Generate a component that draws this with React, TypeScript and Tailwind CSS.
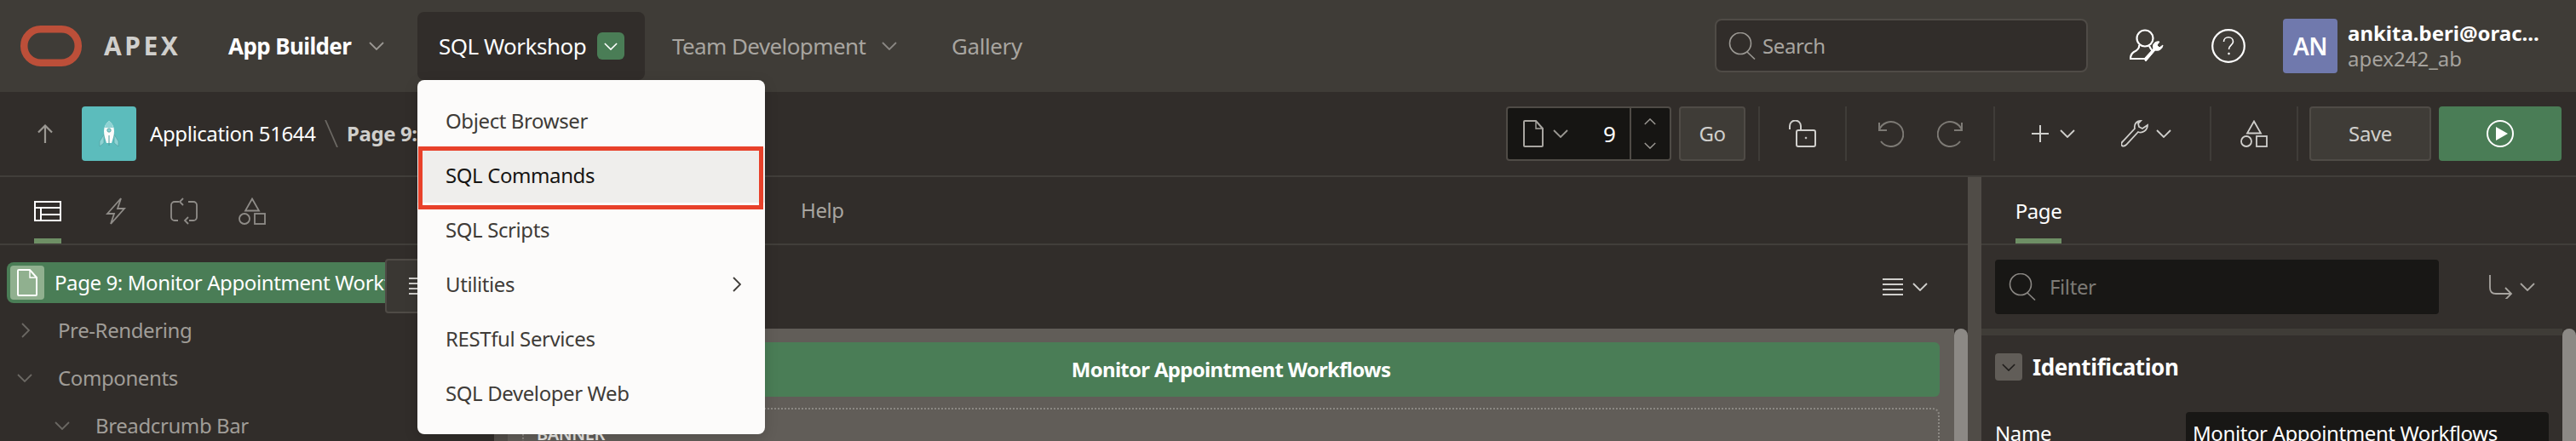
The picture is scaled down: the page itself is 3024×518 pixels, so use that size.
import type { ReactNode } from 'react';

const G = '#9b9893';

function Chevron({ dir = 'down', color = G, className = 'w-[18px] h-[10px]' }: { dir?: 'down' | 'up'; color?: string; className?: string }) {
  return (
    <svg viewBox="0 0 18 10" className={className} fill="none" stroke={color} strokeWidth="1.8">
      <path d={dir === 'down' ? 'M1 1l8 8 8-8' : 'M1 9l8-8 8 8'} />
    </svg>
  );
}

function ChevronRight({ color = G }: { color?: string }) {
  return (
    <svg viewBox="0 0 10 18" className="w-[10px] h-[18px]" fill="none" stroke={color} strokeWidth="1.8">
      <path d="M1 1l8 8-8 8" />
    </svg>
  );
}

function DocIcon({ color = '#a8a5a0', className = 'w-[24px] h-[32px]' }: { color?: string; className?: string }) {
  return (
    <svg viewBox="0 0 24 32" className={className} fill="none" stroke={color} strokeWidth="2">
      <path d="M1 2a1 1 0 0 1 1-1h13l8 9v20a1 1 0 0 1-1 1H2a1 1 0 0 1-1-1z" />
      <path d="M15 1v9h8" strokeWidth="1.4" />
    </svg>
  );
}

function SearchIcon({ color = G }: { color?: string }) {
  return (
    <svg viewBox="0 0 32 32" className="w-[32px] h-[32px]" fill="none" stroke={color} strokeWidth="1.6">
      <circle cx="14" cy="13" r="12.5" />
      <path d="M22 23l9 8.5" />
    </svg>
  );
}

function Shapes({ color }: { color: string }) {
  return (
    <svg viewBox="0 0 32 32" className="w-[32px] h-[32px]" fill="none" stroke={color} strokeWidth="1.8">
      <path d="M16 1.5l8 14H8z" />
      <circle cx="7" cy="25" r="6" />
      <rect x="19" y="19" width="12" height="12" />
    </svg>
  );
}

function Hamburger({ color = '#d0cfcc' }: { color?: string }) {
  return (
    <svg viewBox="0 0 24 20" className="w-[24px] h-[20px]" fill={color}>
      <rect x="0" y="0" width="24" height="2" />
      <rect x="0" y="6" width="24" height="2" />
      <rect x="0" y="12" width="24" height="2" />
      <rect x="0" y="18" width="24" height="2" />
    </svg>
  );
}

function Sep() {
  return <div className="w-[2px] h-[64px] bg-[#3f3c38] shrink-0" />;
}

function TreeRow({ label, open, indent }: { label: string; open?: boolean; indent: string }) {
  return (
    <div className={`flex items-center h-[56px] ${indent}`}>
      <div className="w-[48px] flex justify-start items-center">
        {open ? <Chevron color="#6b6863" /> : <div className="ml-[5px] flex"><ChevronRight color="#6b6863" /></div>}
      </div>
      <span className="text-[24px] text-[#a09d98] leading-none">{label}</span>
    </div>
  );
}

function MenuItem({ label, active, children }: { label: string; active?: boolean; children?: ReactNode }) {
  return (
    <div className={`h-[64px] flex items-center justify-between pl-[33px] pr-[28px] text-[24px] ${active ? 'bg-[#efeeec] text-[#161513]' : 'text-[#3f3c38]'}`}>
      <span>{label}</span>
      {children}
    </div>
  );
}

export default function App() {
  return (
    <div className="relative w-[3024px] h-[518px] overflow-hidden bg-[#312d2a] font-['Noto_Sans',sans-serif] tracking-[-0.4px] flex flex-col">
      {/* Top nav */}
      <header className="h-[108px] shrink-0 bg-[#3f3c37] flex items-center pl-[24px]">
        <svg viewBox="0 0 72 48" className="w-[72px] h-[48px] shrink-0" fill="none" stroke="#bc4f39" strokeWidth="8.5">
          <rect x="4.25" y="4.25" width="63.5" height="39.5" rx="19.5" />
        </svg>
        <span className="ml-[26px] w-[146px] text-[30px] font-bold tracking-[3.5px] text-[#d0cfcc] leading-none">APEX</span>
        <div className="w-[222px] flex items-center">
          <span className="w-[165px] text-[26px] font-bold tracking-[-0.6px] text-white whitespace-nowrap">App Builder</span>
          <Chevron />
        </div>
        <div className="w-[267px] h-[80px] self-start mt-[14px] bg-[#312d2a] rounded-[8px] flex items-center pl-[25px]">
          <span className="w-[186px] text-[26px] tracking-[-0.5px] text-white whitespace-nowrap">SQL Workshop</span>
          <span className="w-[32px] h-[32px] rounded-[6px] bg-[#4a7d56] flex items-center justify-center">
            <Chevron color="#ffffff" className="w-[16px] h-[9px]" />
          </span>
        </div>
        <div className="ml-[32px] w-[328px] flex items-center">
          <span className="w-[246px] text-[26px] tracking-[-0.6px] text-[#a8a5a0] whitespace-nowrap">Team Development</span>
          <Chevron color="#8a8783" />
        </div>
        <span className="w-[896px] text-[26px] text-[#a8a5a0]">Gallery</span>
        <div className="w-[438px] h-[63px] self-start mt-[22px] bg-[#312d2a] border-2 border-[#4f4b46] rounded-[8px] flex items-center pl-[14px] gap-[8px]">
          <SearchIcon />
          <span className="text-[24px] text-[#a8a5a0]">Search</span>
        </div>
        <div className="ml-[49px] w-[96px] shrink-0">
          <svg viewBox="0 0 40 40" className="w-[40px] h-[40px]" fill="none" stroke="#ffffff" strokeWidth="2.2">
            <circle cx="18" cy="11" r="9.5" />
            <path d="M11 19c1 4-2 6-6 8-3 2-4 5-4 8h16" />
            <path d="M23 20c2 4 2 4 4 6" />
            <path d="M19 38l11-13c3 1 8 0 9-6l-4 3-3-3 3-4c-5-1-9 3-7 8L17 35z" fill="#ffffff" strokeWidth="1" />
          </svg>
        </div>
        <div className="w-[84px] shrink-0">
          <svg viewBox="0 0 40 40" className="w-[40px] h-[40px]" fill="none" stroke="#ffffff" strokeWidth="2.2">
            <circle cx="20" cy="20" r="18.8" />
            <path d="M14.5 15c0-7 11-7 11 0 0 4-5 4-5 9" strokeWidth="1.6" />
            <circle cx="20.5" cy="29" r="1" fill="#ffffff" strokeWidth="0.6" />
          </svg>
        </div>
        <div className="w-[64px] h-[64px] shrink-0 rounded-[4px] bg-[#7079ad] flex items-center justify-center text-[28px] font-semibold text-white">AN</div>
        <div className="ml-[12px] flex flex-col tracking-normal">
          <span className="text-[24px] font-bold text-white leading-[30px] whitespace-nowrap">ankita.beri@orac...</span>
          <span className="text-[24px] text-[#a6a39e] leading-[30px]">apex242_ab</span>
        </div>
      </header>

      {/* Page designer toolbar */}
      <div className="h-[100px] shrink-0 border-b-2 border-[#413e3a] flex items-center pl-[44px] pr-[16px]">
        <svg viewBox="0 0 18 22" className="w-[18px] h-[22px] shrink-0" fill="none" stroke="#9b9893" strokeWidth="2.2">
          <path d="M9 22V2M1 9.5L9 1.5l8 8" />
        </svg>
        <div className="ml-[34px] w-[64px] h-[64px] rounded-[4px] bg-[#5cbcbc] flex items-center justify-center shrink-0">
          <svg viewBox="0 0 24 32" className="w-[24px] h-[32px]">
            <path d="M6 17L1 25v6l5-4zM18 17l5 8v6l-5-4z" fill="#8fd3d3" stroke="#4a9c9c" strokeWidth="0.6" />
            <path d="M12 1c4 3 6 7 6 12 0 6-2 10-3 14H9C8 23 6 19 6 13 6 8 8 4 12 1z" fill="#fcfbfa" />
            <path d="M12 1c3 2 5 5 5 8H7c0-3 2-6 5-8z" fill="#8fd3d3" />
            <circle cx="12" cy="12" r="2.2" fill="#8fd3d3" stroke="#4a9c9c" strokeWidth="0.8" />
            <path d="M12 18v12" stroke="#4a9c9c" strokeWidth="1" />
          </svg>
        </div>
        <span className="ml-[16px] w-[205px] text-[24px] text-white whitespace-nowrap">Application 51644</span>
        <svg viewBox="0 0 16 32" className="w-[16px] h-[32px] shrink-0" fill="none" stroke="#6b6863" strokeWidth="1.8">
          <path d="M1 0l14 32" />
        </svg>
        <span className="ml-[10px] w-[1361px] text-[24px] font-bold text-[#d0cfcc] whitespace-nowrap">Page 9:</span>

        <div className="w-[194px] h-[64px] shrink-0 bg-[#161513] border-2 border-[#4f4b46] rounded-[4px] flex items-center">
          <div className="ml-[18px] flex items-center">
            <DocIcon />
            <div className="ml-[11px] flex"><Chevron /></div>
          </div>
          <span className="ml-[41px] w-[16px] text-[26px] text-white">9</span>
          <div className="ml-[15px] w-[46px] h-full border-l-2 border-[#4f4b46] flex flex-col items-center justify-center gap-[20px]">
            <Chevron dir="up" className="w-[14px] h-[8px]" />
            <Chevron className="w-[14px] h-[8px]" />
          </div>
        </div>
        <button className="ml-[9px] w-[78px] h-[64px] shrink-0 bg-[#3f3c37] border-2 border-[#4f4b46] rounded-[4px] text-[24px] text-[#d0cfcc]">Go</button>
        <div className="ml-[15px] flex"><Sep /></div>
        <div className="w-[100px] shrink-0 flex justify-center">
          <svg viewBox="0 0 32 32" className="w-[32px] h-[32px]" fill="none" stroke="#d0cfcc" strokeWidth="2">
            <rect x="9" y="12" width="22" height="19" rx="2" />
            <path d="M1 11V7a6 6 0 0 1 13 0v5" />
            <circle cx="20" cy="21" r="1" fill="#d0cfcc" strokeWidth="0.6" />
          </svg>
        </div>
        <Sep />
        <div className="w-[172px] shrink-0 flex justify-center gap-[39px]">
          <svg viewBox="0 0 32 32" className="w-[32px] h-[32px]" fill="none" stroke="#7d7a75" strokeWidth="2">
            <path d="M3 3v9h9" />
            <path d="M3 12A14.5 14.5 0 1 1 5 25" />
          </svg>
          <svg viewBox="0 0 32 32" className="w-[32px] h-[32px]" fill="none" stroke="#7d7a75" strokeWidth="2">
            <path d="M29 3v9h-9" />
            <path d="M29 12A14.5 14.5 0 1 0 27 25" />
          </svg>
        </div>
        <Sep />
        <div className="w-[252px] shrink-0 flex items-center pl-[43px]">
          <svg viewBox="0 0 20 20" className="w-[20px] h-[20px]" fill="none" stroke="#d0cfcc" strokeWidth="2">
            <path d="M10 0v20M0 10h20" />
          </svg>
          <div className="ml-[13px] flex"><Chevron color="#d0cfcc" /></div>
          <svg viewBox="0 0 32 32" className="ml-[54px] w-[32px] h-[32px]" fill="none" stroke="#d0cfcc" strokeWidth="1.8">
            <path d="M23 1c-5 0-8 4-7 9L2 25c-2 2-2 4-1 5s3 1 5-1l14-15c5 2 11-2 11-8l-6 4-4-2-1-4z" />
          </svg>
          <div className="ml-[9px] flex"><Chevron color="#d0cfcc" /></div>
        </div>
        <Sep />
        <div className="w-[100px] shrink-0 flex justify-center"><Shapes color="#d0cfcc" /></div>
        <Sep />
        <button className="ml-[13px] w-[143px] h-[64px] shrink-0 bg-[#3f3c37] border-2 border-[#4f4b46] rounded-[4px] text-[24px] text-[#d0cfcc]">Save</button>
        <button className="ml-[9px] w-[144px] h-[64px] shrink-0 bg-[#4a7d56] rounded-[4px] flex items-center justify-center">
          <svg viewBox="0 0 32 32" className="w-[32px] h-[32px]" fill="none" stroke="#ffffff" strokeWidth="2">
            <circle cx="16" cy="16" r="15" />
            <path d="M11 8l14 8-14 8z" fill="#ffffff" strokeWidth="0" />
          </svg>
        </button>
      </div>

      {/* Panels */}
      <div className="flex-1 min-h-0 flex">
        {/* Left tree */}
        <div className="w-[580px] shrink-0 flex flex-col">
          <div className="h-[80px] shrink-0 border-b-2 border-[#413e3a] flex items-start pl-[40px] relative">
            <div className="w-[32px] h-[78px] flex flex-col items-center pt-[28px] relative">
              <svg viewBox="0 0 32 24" className="w-[32px] h-[24px]" fill="none" stroke="#ffffff" strokeWidth="2">
                <rect x="1" y="1" width="30" height="22" />
                <path d="M1 8h30M8 8v15M8 16h23" />
              </svg>
              <div className="absolute bottom-0 left-0 right-0 h-[6px] bg-[#6e8f65]" />
            </div>
            <div className="ml-[52px] mt-[24px]">
              <svg viewBox="0 0 24 32" className="w-[24px] h-[32px]" fill="none" stroke="#8f8c88" strokeWidth="1.8">
                <path d="M18 1L2 19h8l-4 12 16-18h-8z" />
              </svg>
            </div>
            <div className="ml-[52px] mt-[24px]">
              <svg viewBox="0 0 32 32" className="w-[32px] h-[32px]" fill="none" stroke="#8f8c88" strokeWidth="1.8">
                <path d="M10 5H5a4 4 0 0 0-4 4v14a4 4 0 0 0 4 4h4M22 27h5a4 4 0 0 0 4-4V9a4 4 0 0 0-4-4h-6" />
                <path d="M13 1l-4 4 4 4M19 23l-4 4 4 4" transform="translate(2 0)" />
              </svg>
            </div>
            <div className="ml-[48px] mt-[24px]"><Shapes color="#8f8c88" /></div>
          </div>
          <div className="relative pt-[20px]">
            <div className="ml-[8px] mr-[40px] h-[48px] bg-[#4a7d56] rounded-[8px] flex items-center pl-[4px]">
              <div className="w-[40px] h-[40px] shrink-0 rounded-[4px] bg-[#90b08f] flex items-center justify-center">
                <DocIcon color="#ffffff" className="w-[24px] h-[32px]" />
              </div>
              <span className="ml-[12px] w-[388px] overflow-hidden text-[24px] text-white whitespace-nowrap">Page 9: Monitor Appointment Workflows</span>
            </div>
            <div className="absolute left-[452px] top-[16px] w-[80px] h-[64px] bg-[#3a3733] border-2 border-[#4f4b46] rounded-[4px] flex items-center justify-center">
              <Hamburger />
            </div>
            <div className="mt-[4px] flex flex-col">
              <TreeRow label="Pre-Rendering" indent="pl-[20px]" />
              <TreeRow label="Components" open indent="pl-[20px]" />
              <TreeRow label="Breadcrumb Bar" open indent="pl-[64px]" />
            </div>
          </div>
        </div>

        {/* Center */}
        <div className="w-[1730px] shrink-0 flex flex-col">
          <div className="h-[80px] shrink-0 border-b-2 border-[#413e3a] flex items-center pl-[360px]">
            <span className="text-[24px] text-[#a8a5a0]">Help</span>
          </div>
          <div className="h-[98px] shrink-0 flex items-center justify-end pr-[47px] gap-[11px]">
            <Hamburger />
            <Chevron color="#d0cfcc" />
          </div>
          <div className="flex-1 flex min-h-0">
            <div className="w-[16px] bg-[#524e49] shrink-0" />
            <div className="flex-1 bg-[#615d58] pt-[16px] pl-[17px] pr-[17px] min-h-0">
              <div className="h-[64px] bg-[#4a7d56] rounded-[6px] flex items-center justify-center text-[24px] font-bold tracking-[-0.7px] text-white">
                Monitor Appointment Workflows
              </div>
              <div className="mt-[13px] h-[80px] border-2 border-dotted border-[#8b8883] rounded-[8px] pl-[15px] pt-[18px]">
                <span className="text-[20px] font-semibold text-[#e8e7e5] leading-none">BANNER</span>
              </div>
            </div>
            <div className="w-[16px] bg-[#8c8985] rounded-t-[8px] shrink-0" />
          </div>
        </div>

        {/* Splitter */}
        <div className="w-[16px] shrink-0 bg-[#504c47]" />

        {/* Right properties */}
        <div className="flex-1 bg-[#332f2c] flex flex-col min-w-0">
          <div className="h-[80px] shrink-0 border-b-2 border-[#413e3a] pl-[40px]">
            <div className="w-[54px] h-[78px] relative flex justify-center pt-[24px]">
              <span className="text-[24px] text-white leading-[32px]">Page</span>
              <div className="absolute bottom-0 left-0 right-0 h-[6px] bg-[#6e8f65]" />
            </div>
          </div>
          <div className="h-[98px] shrink-0 flex items-center pl-[16px]">
            <div className="w-[521px] h-[64px] bg-[#181715] rounded-[4px] flex items-center pl-[16px] gap-[16px]">
              <SearchIcon color="#8a8783" />
              <span className="text-[24px] text-[#7d7a75]">Filter</span>
            </div>
            <svg viewBox="0 0 28 28" className="ml-[59px] w-[28px] h-[28px]" fill="none" stroke="#a8a5a0" strokeWidth="1.8">
              <path d="M1 0v15c0 5 3 7 7 7h18M19 15l7 7-7 7" />
            </svg>
            <div className="ml-[8px] flex"><Chevron color="#a8a5a0" /></div>
          </div>
          <div className="flex-1 flex min-h-0">
            <div className="flex-1 min-w-0">
              <div className="h-[8px] bg-[#3f3c37]" />
              <div className="mt-[20px] ml-[16px] flex items-center">
                <div className="w-[32px] h-[32px] rounded-[4px] bg-[#615d58] flex items-center justify-center">
                  <Chevron color="#1e1c1a" className="w-[16px] h-[9px]" />
                </div>
                <span className="ml-[12px] text-[26px] font-bold tracking-[-0.4px] text-white leading-[34px]">Identification</span>
              </div>
              <div className="mt-[36px] ml-[16px] flex items-start">
                <span className="w-[224px] text-[24px] text-white pt-[8px] leading-[34px]">Name</span>
                <div className="w-[426px] h-[60px] bg-[#181715] rounded-t-[4px] pl-[8px] pt-[8px] text-[24px] leading-[34px] text-white whitespace-nowrap">
                  Monitor Appointment Workflows
                </div>
              </div>
            </div>
            <div className="w-[16px] bg-[#8c8985] rounded-t-[8px] shrink-0" />
          </div>
        </div>
      </div>

      {/* Open SQL Workshop menu */}
      <div className="absolute left-[490px] top-[94px] w-[408px] h-[416px] bg-[#fcfbfa] rounded-[8px] py-[16px] shadow-[0_4px_16px_rgba(0,0,0,0.15)]">
        <MenuItem label="Object Browser" />
        <MenuItem label="SQL Commands" active />
        <MenuItem label="SQL Scripts" />
        <MenuItem label="Utilities">
          <ChevronRight color="#3f3c38" />
        </MenuItem>
        <MenuItem label="RESTful Services" />
        <MenuItem label="SQL Developer Web" />
        <div className="absolute left-[1px] top-[78px] w-[405px] h-[74px] border-[5px] border-[#e8412a]" />
      </div>
    </div>
  );
}
